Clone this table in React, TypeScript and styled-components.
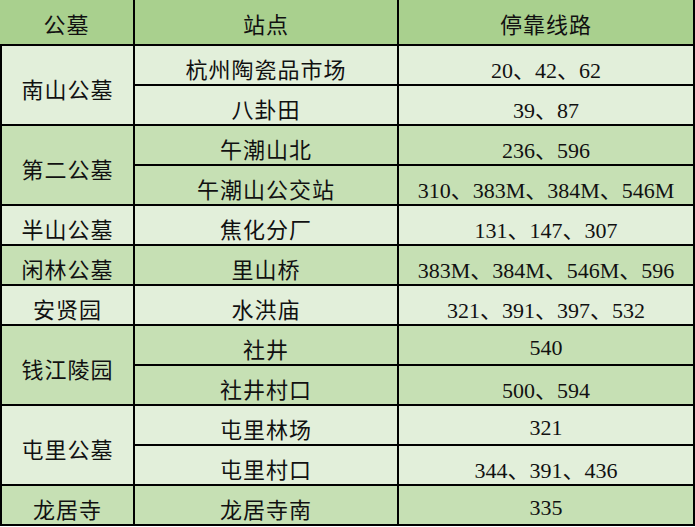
import styled, { createGlobalStyle } from 'styled-components';

type Route = { stop: string; lines: string };
type Cemetery = { name: string; shade: 'light' | 'dark'; routes: Route[] };

const DATA: Cemetery[] = [
  {
    name: '南山公墓',
    shade: 'light',
    routes: [
      { stop: '杭州陶瓷品市场', lines: '20、42、62' },
      { stop: '八卦田', lines: '39、87' }
    ]
  },
  {
    name: '第二公墓',
    shade: 'dark',
    routes: [
      { stop: '午潮山北', lines: '236、596' },
      { stop: '午潮山公交站', lines: '310、383M、384M、546M' }
    ]
  },
  {
    name: '半山公墓',
    shade: 'light',
    routes: [{ stop: '焦化分厂', lines: '131、147、307' }]
  },
  {
    name: '闲林公墓',
    shade: 'dark',
    routes: [{ stop: '里山桥', lines: '383M、384M、546M、596' }]
  },
  {
    name: '安贤园',
    shade: 'light',
    routes: [{ stop: '水洪庙', lines: '321、391、397、532' }]
  },
  {
    name: '钱江陵园',
    shade: 'dark',
    routes: [
      { stop: '社井', lines: '540' },
      { stop: '社井村口', lines: '500、594' }
    ]
  },
  {
    name: '屯里公墓',
    shade: 'light',
    routes: [
      { stop: '屯里林场', lines: '321' },
      { stop: '屯里村口', lines: '344、391、436' }
    ]
  },
  {
    name: '龙居寺',
    shade: 'dark',
    routes: [{ stop: '龙居寺南', lines: '335' }]
  }
];

const SHADES = {
  header: '#a9d08e',
  dark: '#c6e0b4',
  light: '#e2efda'
};

const GlobalStyle = createGlobalStyle`
  html, body {
    margin: 0;
    padding: 0;
    background: #ffffff;
  }
`;

const App = () => {
  let row = 2;
  return (
    <>
      <GlobalStyle />
      <Table>
        <HeadCell $col={1}>公墓</HeadCell>
        <HeadCell $col={2}>站点</HeadCell>
        <HeadCell $col={3}>停靠线路</HeadCell>
        {DATA.map((c) => {
          const start = row;
          row += c.routes.length;
          return [
            <Cell
              key={c.name}
              $shade={c.shade}
              $col={1}
              style={{ gridRow: `${start} / span ${c.routes.length}` }}
            >
              <Label>{c.name}</Label>
            </Cell>,
            ...c.routes.map((r, i) => [
              <Cell
                key={`${c.name}-s${i}`}
                $shade={c.shade}
                $col={2}
                style={{ gridRow: start + i }}
              >
                <Label>{r.stop}</Label>
              </Cell>,
              <Cell
                key={`${c.name}-l${i}`}
                $shade={c.shade}
                $col={3}
                style={{ gridRow: start + i }}
              >
                <Lines>{r.lines}</Lines>
              </Cell>
            ])
          ];
        })}
      </Table>
    </>
  );
};

const Table = styled.div`
  display: grid;
  grid-template-columns: 135px 264px 296px;
  grid-template-rows: 46px repeat(12, 40px);
  width: 695px;
  height: 526px;
  font-family: 'Liberation Serif', 'Noto Sans CJK SC', serif;
  font-size: 22px;
  color: #111111;
`;

const BaseCell = styled.div<{ $col: number }>`
  box-sizing: border-box;
  grid-column: ${(p) => p.$col};
  display: flex;
  align-items: center;
  justify-content: center;
  border-right: 2px solid #000000;
  border-bottom: 2px solid #000000;
  white-space: nowrap;
`;

const HeadCell = styled(BaseCell)`
  grid-row: 1;
  background: ${SHADES.header};
  padding-top: 2px;
  letter-spacing: 1px;
`;

const Cell = styled(BaseCell)<{ $shade: 'light' | 'dark' }>`
  background: ${(p) => SHADES[p.$shade]};
  border-left: ${(p) => (p.$col === 1 ? '2px solid #000000' : 'none')};
  padding-top: 5px;
`;

const Label = styled.span`
  letter-spacing: 1px;
`;

const Lines = styled.span`
  letter-spacing: 0;
`;

export default App;
